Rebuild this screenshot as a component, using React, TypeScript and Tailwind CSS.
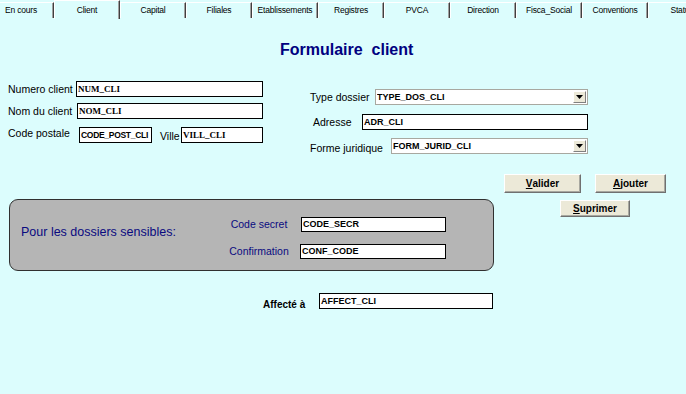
import React from "react";

const tabs = [
  "En cours",
  "Client",
  "Capital",
  "Filiales",
  "Etablissements",
  "Registres",
  "PVCA",
  "Direction",
  "Fisca_Social",
  "Conventions",
  "Statut",
];

function Tab({ label, active }: { label: string; active?: boolean }) {
  if (active) {
    return (
      <div className="w-[66px] shrink-0 h-[19px] flex items-center justify-center border-t border-l border-white border-r border-r-[#404040] shadow-[inset_-1px_0_0_#a0a0a0] bg-[#dcfdfd] text-[8.5px] tracking-[-0.2px] text-black leading-none relative z-10">
        {label}
      </div>
    );
  }
  return (
    <div className="w-[66px] shrink-0 h-[16px] mt-[2px] flex items-center justify-center border-t border-l border-white border-r border-r-[#404040] shadow-[inset_-1px_0_0_#a0a0a0] bg-[#dcfdfd] text-[8.5px] tracking-[-0.2px] text-black leading-none whitespace-nowrap">
      {label}
    </div>
  );
}

function TextBox({
  value,
  w,
  serif,
  h = 16,
  tight,
}: {
  value: string;
  w: string;
  serif?: boolean;
  h?: number;
  tight?: boolean;
}) {
  return (
    <div
      className={`${w} ${h === 15 ? "h-[15px]" : "h-[16px]"} shrink-0 bg-white border border-black flex items-center pl-[1px] ${
        tight ? "text-[8.5px] tracking-[-0.3px]" : "text-[9px]"
      } font-bold text-black leading-none overflow-hidden whitespace-nowrap ${
        serif ? "font-['Liberation_Serif',serif]" : "font-['Liberation_Sans',Arial,sans-serif]"
      }`}
    >
      {value}
    </div>
  );
}

function Combo({ value, w }: { value: string; w: string }) {
  return (
    <div
      className={`${w} h-[16px] shrink-0 bg-white border border-[#a8a8a0] flex items-center pl-[1px] text-[9px] font-bold text-black leading-none`}
    >
      <span className="flex-1 whitespace-nowrap overflow-hidden">{value}</span>
      <div className="w-[13px] h-[12px] mr-[1px] bg-[#ece9d8] border-t border-l border-white border-r border-b border-r-[#808080] border-b-[#808080] flex items-center justify-center">
        <svg width="7" height="4" viewBox="0 0 7 4">
          <path d="M0 0h7L3.5 4z" fill="#000" />
        </svg>
      </div>
    </div>
  );
}

function Btn({ label, w, h }: { label: string; w: string; h: string }) {
  return (
    <div
      className={`${w} ${h} shrink-0 bg-[#ece9d8] border-t border-l border-white border-r border-b border-r-[#707070] border-b-[#707070] shadow-[inset_-1px_-1px_0_#a8a8a0] flex items-center justify-center text-[10px] font-bold text-black leading-none`}
    >
      <span className="underline underline-offset-1">{label[0]}</span>
      {label.slice(1)}
    </div>
  );
}

export default function App() {
  return (
    <div className="w-[686px] h-[394px] overflow-hidden bg-[#dcfdfd] font-['Liberation_Sans',Arial,sans-serif] text-black">
      {/* Tabs */}
      <div className="flex h-[18px] ml-[-12px] items-start">
        {tabs.map((t) => (
          <Tab key={t} label={t} active={t === "Client"} />
        ))}
      </div>

      {/* Title */}
      <div className="mt-[22px] h-[20px] pl-[280px] flex items-center text-[16px] font-bold text-[#000080] leading-none whitespace-pre">
        {"Formulaire  client"}
      </div>

      {/* Top form */}
      <div className="mt-[21px] flex items-start">
        <div className="ml-[8px] w-[255px] flex flex-col text-[10.5px] leading-none">
          <div className="flex items-center h-[16px]">
            <span className="w-[68px]">Numero client</span>
            <TextBox value="NUM_CLI" w="w-[187px]" serif />
          </div>
          <div className="flex items-center h-[16px] mt-[6px]">
            <span className="w-[69px]">Nom du client</span>
            <TextBox value="NOM_CLI" w="w-[186px]" serif />
          </div>
          <div className="flex items-start h-[16px] mt-[8px]">
            <span className="w-[71px] mt-[1px]">Code postale</span>
            <TextBox value="CODE_POST_CLI" w="w-[73px]" tight />
            <span className="ml-[8px] w-[21px] mt-[4px]">Ville</span>
            <TextBox value="VILL_CLI" w="w-[82px]" serif />
          </div>
        </div>

        <div className="ml-[47px] mt-[8px] flex flex-col text-[10.5px] leading-none">
          <div className="flex items-center h-[16px]">
            <span className="w-[65px]">Type dossier</span>
            <Combo value="TYPE_DOS_CLI" w="w-[213px]" />
          </div>
          <div className="flex items-center h-[16px] mt-[9px]">
            <span className="ml-[3px] w-[49px]">Adresse</span>
            <TextBox value="ADR_CLI" w="w-[226px]" />
          </div>
          <div className="flex items-center h-[16px] mt-[8px]">
            <span className="w-[81px] mt-[4px]">Forme juridique</span>
            <Combo value="FORM_JURID_CLI" w="w-[197px]" />
          </div>
        </div>
      </div>

      {/* Lower area */}
      <div className="mt-[20px] flex items-start">
        <div className="ml-[9px] mt-[25px] w-[485px] h-[72px] rounded-[9px] bg-[#b5b5b5] border border-[#303030] flex items-start">
          <div className="ml-[11px] mt-[26px] w-[204px] text-[12.5px] leading-none text-[#0a0a80] whitespace-nowrap">
            Pour les dossiers sensibles:
          </div>
          <div className="mt-[17px] flex flex-col">
            <div className="flex items-center h-[15px]">
              <span className="w-[68px] text-center text-[10.5px] leading-none text-[#0a0a80]">
                Code secret
              </span>
              <div className="ml-[8px]">
                <TextBox value="CODE_SECR" w="w-[145px]" h={15} />
              </div>
            </div>
            <div className="flex items-center h-[15px] mt-[12px]">
              <span className="w-[68px] text-center text-[10.5px] leading-none text-[#0a0a80]">
                Confirmation
              </span>
              <div className="ml-[7px]">
                <TextBox value="CONF_CODE" w="w-[146px]" h={15} />
              </div>
            </div>
          </div>
        </div>

        <div className="flex flex-col">
          <div className="flex">
            <div className="ml-[10px]">
              <Btn label="Valider" w="w-[77px]" h="h-[19px]" />
            </div>
            <div className="ml-[14px]">
              <Btn label="Ajouter" w="w-[71px]" h="h-[19px]" />
            </div>
          </div>
          <div className="ml-[66px] mt-[7px]">
            <Btn label="Suprimer" w="w-[70px]" h="h-[17px]" />
          </div>
        </div>
      </div>

      {/* Affecté à */}
      <div className="mt-[21px] flex items-center">
        <span className="ml-[263px] w-[56px] text-[10px] font-bold leading-none mt-[8px]">
          Affecté à
        </span>
        <TextBox value="AFFECT_CLI" w="w-[174px]" />
      </div>
    </div>
  );
}
